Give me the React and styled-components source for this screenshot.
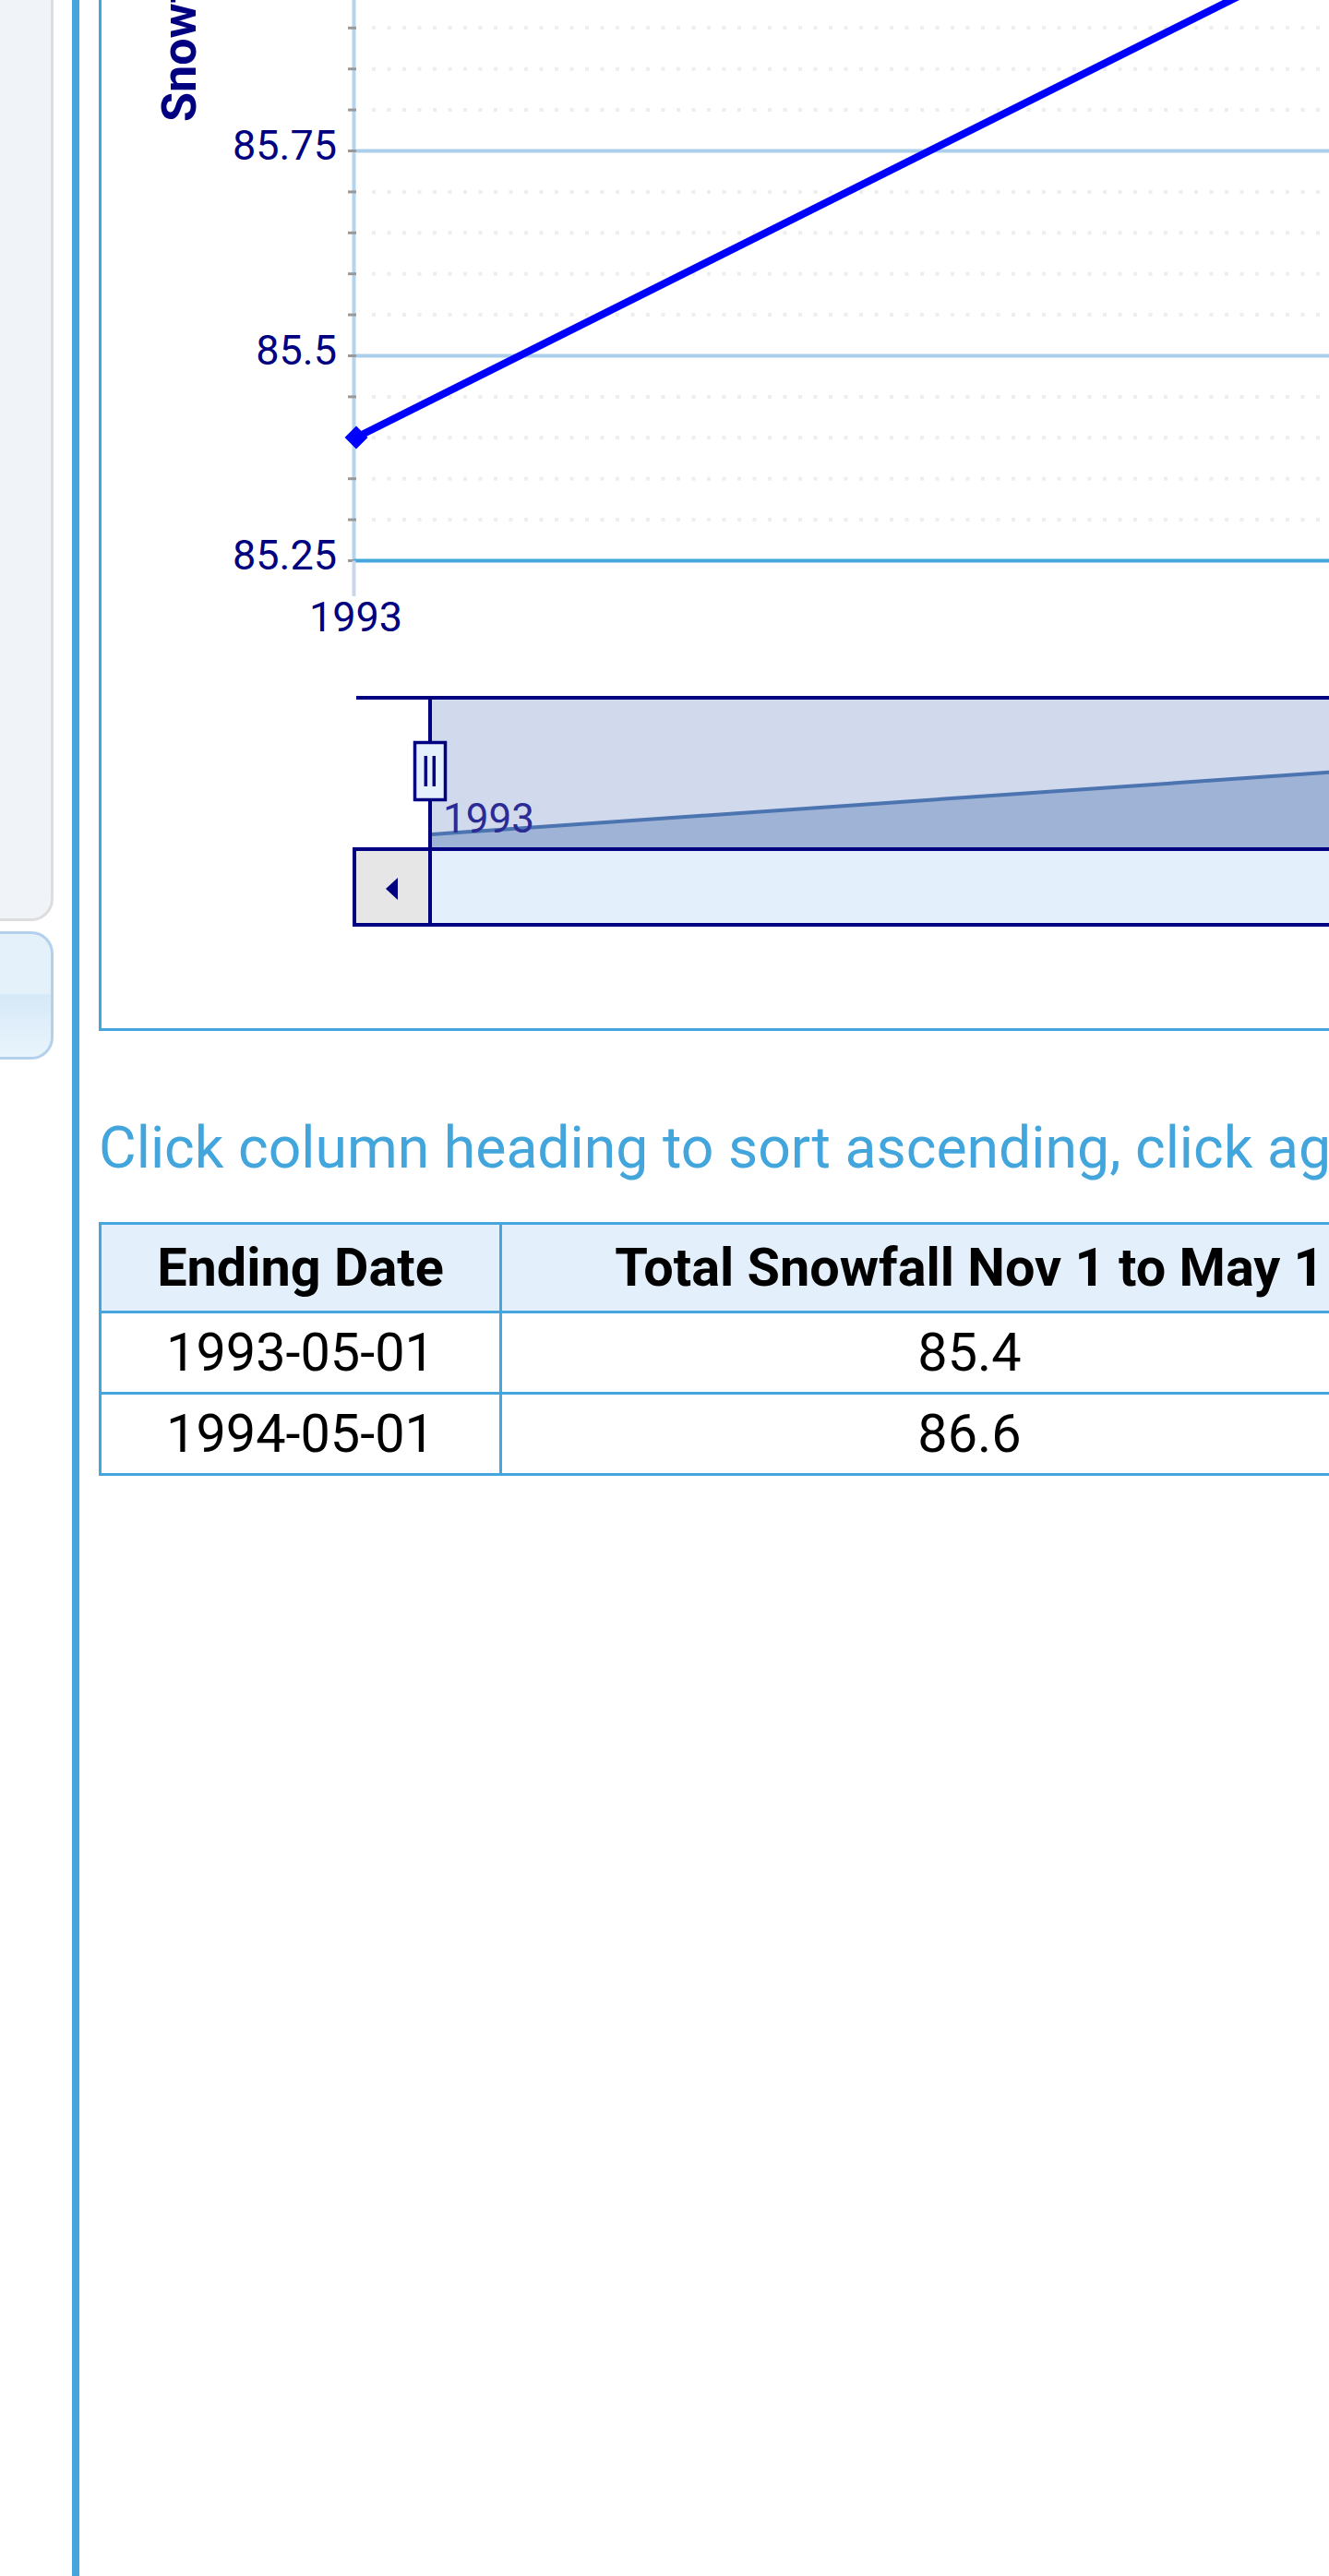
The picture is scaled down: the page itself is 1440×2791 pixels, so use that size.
import React from 'react';
import styled, { createGlobalStyle } from 'styled-components';

const BLUE = '#44a6dd';
const NAVY = '#000080';

const GlobalStyle = createGlobalStyle`
  * { box-sizing: border-box; }
  html, body {
    margin: 0;
    padding: 0;
    overflow: hidden;
    background: #ffffff;
  }
  body {
    font-family: Roboto, "Liberation Sans", Arial, sans-serif;
  }
`;

const Page = styled.div`
  display: flex;
  align-items: flex-start;
  width: 1440px;
  height: 2791px;
  overflow: hidden;
  background: #ffffff;
`;

const Sidebar = styled.aside`
  flex: 0 0 58px;
  display: flex;
  flex-direction: column;
  gap: 11px;
`;

const MenuPanel = styled.div`
  height: 998px;
  background: #f0f4f8;
  border-right: 3px solid #dddddd;
  border-bottom: 3px solid #dddddd;
  border-bottom-right-radius: 24px;
`;

const MenuButton = styled.div`
  height: 139px;
  border: 3px solid #b3d1eb;
  border-left: none;
  border-radius: 0 24px 24px 0;
  background: linear-gradient(
    #e4f1fb 0%,
    #e4f1fb 48%,
    #d6e9f8 50%,
    #e9f4fc 100%
  );
`;

const Main = styled.main`
  flex: 0 0 2600px;
  margin-left: 20px;
  min-height: 2791px;
  border-left: 8px solid ${BLUE};
  padding-left: 21px;
`;

const ChartBox = styled.section`
  width: 2400px;
  height: 1117px;
  border: 3px solid ${BLUE};
  border-top: none;
`;

const ChartSvg = styled.svg`
  display: block;
  font-family: Roboto, "Liberation Sans", Arial, sans-serif;
`;

const SortNote = styled.p`
  margin: 89px 0 0;
  font-size: 62.5px;
  line-height: 75px;
  color: #42a5dc;
  white-space: nowrap;
`;

const DataTable = styled.table`
  margin-top: 43px;
  border-collapse: separate;
  border-spacing: 0;
  border-top: 3px solid ${BLUE};
  border-left: 3px solid ${BLUE};
  font-size: 57.6px;
  color: #000000;
`;

const HeadCell = styled.th`
  box-sizing: content-box;
  width: ${(p) => p.$w}px;
  padding: 0;
  line-height: 93px;
  font-weight: 700;
  text-align: center;
  background: #e3f0fb;
  border-right: 3px solid ${BLUE};
  border-bottom: 3px solid ${BLUE};
  white-space: nowrap;
`;

const Cell = styled.td`
  box-sizing: content-box;
  padding: 0;
  line-height: 85px;
  text-align: center;
  border-right: 3px solid ${BLUE};
  border-bottom: 3px solid ${BLUE};
`;

const rows = [
  { date: '1993-05-01', total: '85.4' },
  { date: '1994-05-01', total: '86.6' },
];

// page x of the chart box inner left edge
const OX = 110;
const SVG_W = 2394;
const SVG_H = 1114;
const RIGHT = OX + SVG_W;

const majors = [
  { y: 163.5, label: '85.75' },
  { y: 385.5, label: '85.5' },
];
const AXIS_Y = 607.5;
const minorStep = 44.4;

const minorYs = [];
for (let k = -3; k <= 9; k++) {
  if (k === 0 || k === 5) continue;
  minorYs.push(163.5 + minorStep * k);
}

const SnowChart = () => (
  <ChartSvg
    width={SVG_W}
    height={SVG_H}
    viewBox={`${OX} 0 ${SVG_W} ${SVG_H}`}
  >
    {/* minor dotted grid */}
    {minorYs.map((y) => (
      <line
        key={`mg${y}`}
        x1={403}
        x2={RIGHT}
        y1={y}
        y2={y}
        stroke="#eeeeee"
        strokeWidth={4}
        strokeDasharray="4 12.5"
      />
    ))}

    {/* major grid */}
    {majors.map((m) => (
      <line
        key={`g${m.label}`}
        x1={386}
        x2={RIGHT}
        y1={m.y}
        y2={m.y}
        stroke="#abcfea"
        strokeWidth={4}
      />
    ))}

    {/* y axis line + minor ticks */}
    <line x1={383.5} x2={383.5} y1={0} y2={AXIS_Y} stroke="#b4d3ec" strokeWidth={4} />
    {[...minorYs, ...majors.map((m) => m.y), AXIS_Y].map((y) => (
      <line key={`t${y}`} x1={377} x2={386} y1={y} y2={y} stroke="#999999" strokeWidth={3} />
    ))}

    {/* x axis */}
    <line x1={383.5} x2={RIGHT} y1={AXIS_Y} y2={AXIS_Y} stroke={BLUE} strokeWidth={4} />
    <line x1={383.5} x2={383.5} y1={AXIS_Y} y2={646} stroke="#ccd6eb" strokeWidth={4} />

    {/* y labels */}
    {[...majors, { y: AXIS_Y, label: '85.25' }].map((m) => (
      <text
        key={`l${m.label}`}
        x={365}
        y={m.y + 9.5}
        textAnchor="end"
        fontSize={45}
        fill={NAVY}
      >
        {m.label}
      </text>
    ))}

    <text
      transform="translate(212 132) rotate(-90)"
      fontSize={52}
      fontWeight={700}
      fill={NAVY}
    >
      Snowfall (inches)
    </text>

    <text x={385.5} y={684} textAnchor="middle" fontSize={45} fill={NAVY}>
      1993
    </text>

    {/* series */}
    <line x1={386} y1={474} x2={2522} y2={-594} stroke="#0000ff" strokeWidth={8} strokeLinecap="round" />
    <polygon points="386,461.5 398.5,474 386,486.5 373.5,474" fill="#0000ff" />

    {/* navigator */}
    <rect x={468} y={758} width={RIGHT - 468} height={160} fill="#d1daed" />
    <polygon points="468,904 2522,762 2522,918 468,918" fill="#9eb3d6" />
    <line x1={468} y1={904} x2={2522} y2={762} stroke="#4b74b0" strokeWidth={4} />
    <text x={480} y={902} fontSize={44} fill="#2b2b96">
      1993
    </text>
    <line x1={386} x2={RIGHT} y1={756} y2={756} stroke={NAVY} strokeWidth={4} />
    <line x1={466} x2={466} y1={756} y2={920} stroke={NAVY} strokeWidth={4} />
    <rect x={449.5} y={804.5} width={33} height={62} fill="#e4f0fb" stroke={NAVY} strokeWidth={3.5} />
    <line x1={461.3} x2={461.3} y1={819} y2={852} stroke={NAVY} strokeWidth={3.5} />
    <line x1={470.3} x2={470.3} y1={819} y2={852} stroke={NAVY} strokeWidth={3.5} />

    {/* scrollbar */}
    <rect x={384} y={920} width={RIGHT - 384 + 10} height={82} fill="#e3f0fb" stroke={NAVY} strokeWidth={4} />
    <rect x={384} y={920} width={82} height={82} fill="#e6e6e6" stroke={NAVY} strokeWidth={4} />
    <polygon points="418,963 431,951 431,975" fill={NAVY} />
  </ChartSvg>
);

const App = () => (
  <>
    <GlobalStyle />
    <Page>
      <Sidebar>
        <MenuPanel />
        <MenuButton />
      </Sidebar>
      <Main>
        <ChartBox>
          <SnowChart />
        </ChartBox>
        <SortNote>
          Click column heading to sort ascending, click again to sort descending.
        </SortNote>
        <DataTable>
          <thead>
            <tr>
              <HeadCell $w={431}>Ending Date</HeadCell>
              <HeadCell $w={1013}>Total Snowfall Nov 1 to May 1</HeadCell>
            </tr>
          </thead>
          <tbody>
            {rows.map((r) => (
              <tr key={r.date}>
                <Cell>{r.date}</Cell>
                <Cell>{r.total}</Cell>
              </tr>
            ))}
          </tbody>
        </DataTable>
      </Main>
    </Page>
  </>
);

export default App;
